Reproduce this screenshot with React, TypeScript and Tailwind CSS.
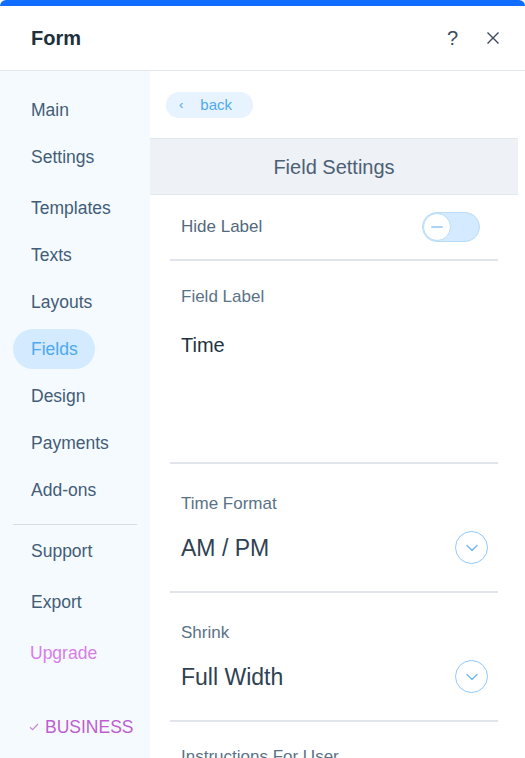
import { ChevronDown } from "lucide-react";

const navTop = ["Main", "Settings", "Templates", "Texts", "Layouts", "Fields", "Design", "Payments", "Add-ons"];

function NavItem({ label, active, extra = "" }: { label: string; active?: boolean; extra?: string }) {
  return (
    <div
      className={
        (active
          ? "ml-[13px] flex h-[40px] w-[82px] items-center rounded-full bg-[#d3eaff] pl-[18px] text-[#4ea9f0] "
          : "flex h-[40px] items-center pl-[31px] text-[#435d76] ") + extra
      }
    >
      {label}
    </div>
  );
}

function SelectRow({ label, value }: { label: string; value: string }) {
  return (
    <div className="mx-[20px] shrink-0 border-b-2 border-[#dfe5eb] pb-[26px] pt-[27px]">
      <div className="px-[11px] text-[17px] text-[#5a7287]">{label}</div>
      <div className="mt-[14px] flex items-center justify-between pl-[11px] pr-[10px]">
        <span className="text-[23px] text-[#2e4253]">{value}</span>
        <span className="flex h-[33px] w-[33px] items-center justify-center rounded-full border-[1.5px] border-[#8ec8f7]">
          <ChevronDown size={20} strokeWidth={1.6} className="text-[#6fb6f2]" />
        </span>
      </div>
    </div>
  );
}

export default function App() {
  return (
    <div
      className="flex h-[758px] w-[525px] flex-col overflow-hidden bg-white"
      style={{ fontFamily: '"Liberation Sans", Arial, sans-serif' }}
    >
      <div className="h-[6px] shrink-0 rounded-t-[6px] bg-[#116dff]" />
      <div className="flex h-[65px] shrink-0 items-center justify-between border-b border-[#e3e8ee] pl-[31px] pr-[25px]">
        <span className="text-[20px] font-bold text-[#20303c]">Form</span>
        <div className="flex items-center gap-[28px] text-[#3b4a5c]">
          <span className="text-[20px] font-light">?</span>
          <svg width="14" height="14" viewBox="0 0 14 14" fill="none">
            <path d="M1.5 1.5l11 11M12.5 1.5l-11 11" stroke="currentColor" strokeWidth="1.4" />
          </svg>
        </div>
      </div>
      <div className="flex min-h-0 flex-1">
        <div className="flex w-[150px] shrink-0 flex-col bg-[#f5faff] pt-[19px] text-[17.5px]">
          <div className="flex flex-col gap-[7px]">
            {navTop.map((n) => (
              <NavItem key={n} label={n} active={n === "Fields"} extra={n === "Templates" ? "mt-[4px]" : ""} />
            ))}
          </div>
          <div className="mx-[13px] mt-[14px] border-t border-[#d5dee7]" />
          <div className="mt-[6px] flex flex-col gap-[11px]">
            <NavItem label="Support" />
            <NavItem label="Export" />
            <div className="flex h-[40px] items-center pl-[30px] text-[#d57ee9]">Upgrade</div>
          </div>
          <div className="mt-[34px] flex h-[40px] items-center pl-[29px] text-[#bd5fce]">
            <svg width="10" height="8" viewBox="0 0 10 8" fill="none" className="mr-[6px]">
              <path d="M1 4.2l2.6 2.4L9 1" stroke="#c48bd3" strokeWidth="1.2" />
            </svg>
            <span className="text-[17.5px]">BUSINESS</span>
          </div>
        </div>
        <div className="flex min-w-0 flex-1 flex-col pr-[7px]">
          <div className="shrink-0 pl-[16px] pt-[21px]">
            <div className="flex h-[26px] w-[87px] items-center rounded-full bg-[#e7f3ff] pl-[13px] text-[15px] text-[#4ea9f0]">
              <span className="mr-[17px] text-[13px]">‹</span>
              back
            </div>
          </div>
          <div className="mt-[20px] flex h-[57px] shrink-0 items-center justify-center border-y border-[#e1e7ee] bg-[#eef1f5] text-[20px] text-[#4b6075]">
            Field Settings
          </div>
          <div className="mx-[20px] flex h-[66px] shrink-0 items-center justify-between border-b-2 border-[#dfe5eb] pl-[11px] pr-[18px]">
            <span className="text-[17px] text-[#52697e]">Hide Label</span>
            <div className="flex h-[30px] w-[58px] items-center rounded-full border border-[#b9dcf9] bg-[#d3eaff]">
              <div className="flex h-[28px] w-[28px] items-center justify-center rounded-full border border-[#b9dcf9] bg-white">
                <div className="h-[2px] w-[12px] rounded bg-[#a9d3f7]" />
              </div>
            </div>
          </div>
          <div className="mx-[20px] h-[203px] shrink-0 border-b-2 border-[#dfe5eb] px-[11px] pt-[23px]">
            <div className="text-[17px] text-[#5a7287]">Field Label</div>
            <div className="mt-[20px] text-[20px] text-[#1e3242]">Time</div>
          </div>
          <SelectRow label="Time Format" value="AM / PM" />
          <SelectRow label="Shrink" value="Full Width" />
          <div className="mx-[20px] shrink-0 px-[11px] pt-[22px] text-[17px] text-[#5a7287]">Instructions For User</div>
        </div>
      </div>
    </div>
  );
}
